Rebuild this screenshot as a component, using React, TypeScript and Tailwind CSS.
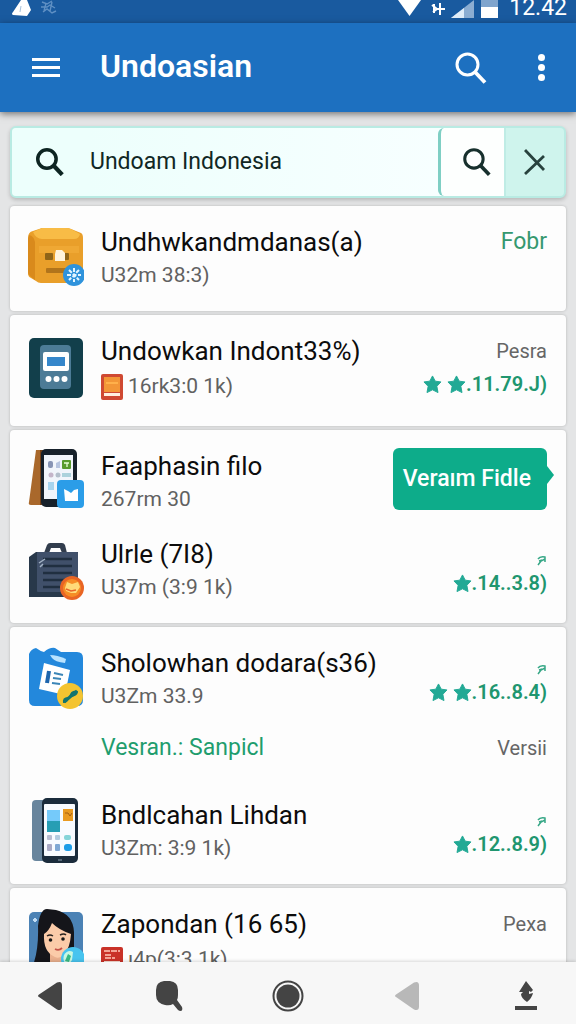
import type { ReactNode } from 'react';

function SearchIcon({ size, stroke }: { size: number; stroke: number }) {
    return (
        <svg width={size} height={size} viewBox="0 0 32 32" fill="none" stroke="currentColor" strokeWidth={stroke} aria-hidden="true">
            <circle cx="12.5" cy="12.5" r="10.5" />
            <path d="M20 20l10 10.5" strokeWidth={stroke + 0.8} />
        </svg>
    );
}

function Star() {
    return (
        <svg width="19" height="19" viewBox="0 0 20 20" fill="#22a995" stroke="#22a995" strokeLinejoin="round" aria-hidden="true">
            <path d="M10 1l2.900 5.500 6 .8-4.300 4.600 1.200 6.600L10 15.600l-5.800 2.900 1.200-6.600L1 7.300l6.100-.8z" />
        </svg>
    );
}

function BoxIcon() {
    return (
        <>
            <path d="M14 4h24q3 0 5 1l10 4q2 1 2 5v40q0 5-5 5H13q-3 0-5-2l-5-3q-3-1-3-5V14q0-6 5-7z" fill="#e99f2a" />
            <path d="M14 4h24q3 0 5 1l9 5q-1 5-6 5H14Q8 15 5 8z" fill="#f8bc46" />
            <path d="M1 11q5 1 6 7v38l-5-4q-2-1-2-5V15z" fill="#d98a1c" />
            <path d="M11 22h40v7H11z" fill="#efa834" />
            <rect x="17" y="29" width="8" height="7" rx="1" fill="#8f6418" />
            <rect x="36" y="29" width="5" height="7" rx="1" fill="#8f6418" />
            <path d="M28 26h6l3 3v8H27v-7z" fill="#fff3dc" />
            <rect x="18" y="44" width="22" height="5" rx="1" fill="#b1741b" />
            <circle cx="46" cy="51" r="11" fill="#2f93dc" />
            <path d="M46 44v14M39 51h14M41 46l10 10M51 46L41 56" stroke="#e4f6ff" strokeWidth="2" strokeDasharray="4 1.5" />
        </>
    );
}

function TerminalIcon() {
    return (
        <>
            <rect x="1" y="5" width="54" height="60" rx="5" fill="#123f4b" />
            <rect x="12" y="12" width="31" height="44" rx="4" fill="#4c7b96" />
            <rect x="15" y="19" width="26" height="19" rx="2" fill="#fff" />
            <rect x="19" y="24" width="18" height="9" fill="#3587cb" />
            <circle cx="20.5" cy="46" r="3" fill="#fff" />
            <circle cx="28.5" cy="46" r="3" fill="#fff" />
            <circle cx="36.5" cy="46" r="3" fill="#fff" />
        </>
    );
}

function TabletIcon() {
    return (
        <>
            <path d="M8 2h10v55H3q-3 0-2-3z" fill="#a9682b" />
            <path d="M12 2h4v55h-4z" fill="#754116" />
            <rect x="13" y="1" width="36" height="58" rx="5" fill="#17212b" />
            <rect x="16" y="7" width="29" height="44" fill="#f1f5fb" />
            <rect x="20" y="13" width="5" height="7" rx="2" fill="#8794b4" />
            <path d="M28 20v-5l4-2v7z" fill="#b6c4df" />
            <rect x="34" y="12" width="9" height="9" rx="1" fill="#5a9c2e" />
            <path d="M36 15h5M39 15v4" stroke="#e9ffd8" strokeWidth="1.3" />
            <circle cx="23" cy="27" r="2.5" fill="#c4b5c9" />
            <circle cx="30" cy="27" r="2.5" fill="#b4bfcc" />
            <rect x="34" y="25" width="9" height="4" fill="#acd2dc" />
            <rect x="20" y="34" width="6" height="8" fill="#a8d4ee" />
            <rect x="29" y="32" width="27" height="28" rx="4" fill="#2b9de8" />
            <path d="M36 41l4 2 3 2 3-3 4-1v12H37z" fill="#fff" />
        </>
    );
}

function SuitcaseIcon() {
    return (
        <>
            <path d="M16 17l3-8q1-2 3-2h12q2 0 3 2l2 8h-5l-2-5H23l-2 5z" fill="#323d4d" />
            <path d="M1 21l7-5h42v45H1z" fill="#28384a" />
            <rect x="9" y="16" width="41" height="40" rx="1" fill="#40506a" />
            <path d="M15 23h29M15 30h29M15 37h29M15 44h23M15 51h20" stroke="#202f40" strokeWidth="2.5" />
            <path d="M11 27l6-4M12 31l3-3" stroke="#a2b2c4" strokeWidth="1.5" />
            <circle cx="44" cy="52" r="12" fill="#e96524" />
            <circle cx="44" cy="52" r="9" fill="#f68d25" />
            <path d="M39 46l5 2 6-2 2 5-4 6h-5l-5-2-1-3z" fill="#ffdb79" />
            <path d="M38 53l5 2 5-1" stroke="#e7632a" strokeWidth="1.5" fill="none" />
        </>
    );
}

function ClipboardIcon() {
    return (
        <>
            <path d="M1 9q2-5 7-6 4 3 8 4 6-5 11-4l6 4h16q6 0 6 6v42q0 6-6 6H7q-6 0-6-6z" fill="#2388dc" />
            <path d="M22 10q7 0 16 4l-1 4q-10-1-13-5z" fill="#b9e3ff" />
            <path d="M16 18l26 7-5 25-26-6z" fill="#fff" />
            <path d="M21 26l-2 12" stroke="#1d65ad" strokeWidth="4" />
            <path d="M26 28l9 2M25 33l8 1M24 38l8 1" stroke="#3c86b7" strokeWidth="2.2" />
            <circle cx="42" cy="51" r="13" fill="#f4c431" />
            <path d="M35 58q-1-6 5-6 1 6-5 6zM41 52q2-8 9-6 0 6-9 6z" fill="#13756f" />
            <path d="M36 57l13-11" stroke="#13756f" strokeWidth="3" />
        </>
    );
}

function PhoneIcon() {
    return (
        <>
            <rect x="4" y="3" width="22" height="61" rx="4" fill="#68859d" />
            <rect x="14" y="1" width="36" height="65" rx="5" fill="#1b2c3c" />
            <rect x="16" y="7" width="31" height="52" rx="1" fill="#f8fbff" />
            <rect x="19" y="13" width="13" height="12" fill="#75cafa" />
            <rect x="19" y="24" width="13" height="11" fill="#279eb4" />
            <rect x="35" y="12" width="10" height="12" fill="#e99a21" />
            <path d="M37 16h3l2 3 2-3" stroke="#a55e12" fill="none" />
            <rect x="19" y="38" width="5" height="5" rx="1" fill="#b9bdd1" />
            <rect x="27" y="38" width="5" height="5" rx="1" fill="#b3cce0" />
            <rect x="36" y="38" width="7" height="5" rx="2" fill="#86d5d9" />
            <rect x="19" y="47" width="5" height="7" rx="1" fill="#aaaac5" />
            <rect x="27" y="47" width="5" height="7" rx="1" fill="#80a8d4" />
            <rect x="36" y="47" width="8" height="7" rx="3" fill="#1e9de7" />
            <path d="M30 63h4" stroke="#8da0b0" />
        </>
    );
}

function PortraitIcon() {
    return (
        <>
            <rect x="1" y="6" width="54" height="60" rx="5" fill="#4b82b5" />
            <path d="M5 14h4M7 12v4" stroke="#c2ddf4" strokeWidth="2" />
            <path d="M10 20Q12 3 19 3l9 1q17 4 18 22v40H2q9-17 8-46z" fill="#15151a" />
            <path d="M22 48h14v18H11q10-4 11-9z" fill="#eab08e" />
            <path d="M16 28q5-3 8-11 7 7 19 11-1 14-7 21-5 4-9 2-12-5-11-23z" fill="#fbcba9" />
            <path d="M19 30q3-2 6 0M32 29q4-2 6 0" stroke="#29221f" strokeWidth="1.5" fill="none" />
            <circle cx="22.5" cy="34" r="1.8" fill="#171717" />
            <circle cx="35" cy="33" r="1.8" fill="#171717" />
            <path d="M27 43q4 2 7-1" stroke="#c45249" strokeWidth="1.8" fill="none" />
            <circle cx="45" cy="53" r="12" fill="#48c4ef" />
            <path d="M36 49q4-6 9-3l-1 8-4 6q-6-4-4-11z" fill="#c9f7e2" />
            <path d="M40 48l3 2-2 6-4-1z" fill="#36b984" />
        </>
    );
}

function OrangeTag() {
    return (
        <svg width="22" height="26" viewBox="0 0 22 26" aria-hidden="true">
            <rect width="22" height="26" rx="2" fill="#cf4932" />
            <rect x="3" y="3" width="16" height="15" fill="#f39637" />
            <path d="M5 9h12" stroke="#ffb04b" strokeWidth="2" />
            <rect x="3" y="19" width="16" height="3" fill="#fff0df" />
        </svg>
    );
}

function RedTag() {
    return (
        <svg width="22" height="26" viewBox="0 0 22 26" aria-hidden="true">
            <rect width="22" height="26" rx="2" fill="#c93228" />
            <path d="M3 4h16M4 8h6M4 11h10" stroke="#ffc9b9" strokeWidth="1.5" strokeDasharray="6 1" />
            <rect x="3" y="14" width="16" height="8" fill="#f8ded5" />
            <path d="M4 17h13" stroke="#c93228" strokeWidth="2" />
        </svg>
    );
}

function TrendMark() {
    return (
        <svg width="10" height="14" viewBox="0 0 10 14" fill="none" stroke="#36a786" strokeWidth="1.5" aria-hidden="true">
            <path d="M1 5q2-3 7-2v5M1 11l3-4 4-2M2 7l3-1" />
        </svg>
    );
}

function Rating({ stars, value }: { stars: number; value: string }) {
    return (
        <div className="flex h-[30px] items-center text-xl font-semibold text-[#20966f]">
            <span className="flex items-center gap-[5px]">
                {Array.from({ length: stars }, (_, i) => (
                    <Star key={i} />
                ))}
            </span>
            {value}
        </div>
    );
}

type AppRowProps = {
    icon: ReactNode;
    title: string;
    detail: string;
    tag?: ReactNode;
    children?: ReactNode;
};

function AppRow({ icon, title, detail, tag, children }: AppRowProps) {
    return (
        <li className="flex gap-[17px]">
            <svg width="56" height="66" viewBox="0 0 56 66" className="shrink-0" aria-hidden="true">
                {icon}
            </svg>
            <div className="min-w-0 flex-1 whitespace-nowrap">
                <h2 className="text-[26px] leading-9 text-[#0c0c0c]">{title}</h2>
                <p className={tag ? 'flex h-9 items-center gap-[5px] text-[21px] text-[#616161]' : 'text-[21px] leading-[30px] text-[#616161]'}>
                    {tag}
                    {detail}
                </p>
            </div>
            {children}
        </li>
    );
}

function Card({ children }: { children: ReactNode }) {
    return (
        <ul className="flex flex-col gap-[22px] rounded-[4px] bg-[#fdfdfd] pt-[18px] pr-[19px] pb-[21px] pl-[18px] shadow-[0_0_3px_rgba(0,0,0,0.22)]">
            {children}
        </ul>
    );
}

function StatusBar() {
    return (
        <div className="flex h-[23px] shrink-0 items-start justify-between bg-[#195a9f] pr-[9px] pl-3 text-white">
            <svg width="46" height="18" viewBox="0 0 46 18" aria-hidden="true">
                <path d="M9 0h6l4 10-4 6-14-1q-2-1 0-3z" fill="#fff" />
                <path d="M9 6l-1 6" stroke="#a5c0dc" />
                <path d="M30 2l5 2 5-3M29 7h6l3-2 5 3M31 12l4-3 5 4 4-2M34 3l-2 8M40 2l-2 9" stroke="#5f90c4" strokeWidth="1.4" fill="none" />
            </svg>
            <div className="flex items-start gap-[7px]">
                <svg width="100" height="18" viewBox="0 0 100 18" aria-hidden="true">
                    <path d="M0 0h23L11.5 16z" fill="#fff" />
                    <path d="M36 4v9M34 5l5 4-4 3M42 3v12M38 9h9" stroke="#fff" strokeWidth="2" fill="none" />
                    <path d="M53 18L76 0v18z" fill="#8badd2" />
                    <path d="M53 18l13-10v10z" fill="#e0edf9" />
                    <path d="M83 0h17v8H83z" fill="#7fa4cd" />
                    <path d="M83 7h17v11H83z" fill="#fff" />
                </svg>
                <span className="-mt-1 pl-1 text-[23px] leading-6">12.42</span>
            </div>
        </div>
    );
}

export default function App() {
    return (
        <div className="flex h-screen flex-col overflow-hidden bg-[#e4e5e6] font-['Roboto',sans-serif]">
            <StatusBar />
            <header className="relative flex h-[89px] shrink-0 items-center bg-[#1d70c0] pr-[23px] pl-8 text-white shadow-[0_2px_7px_rgba(0,0,0,0.5)]">
                <button type="button" aria-label="Menu" className="flex w-7 flex-col gap-[5px]">
                    <span className="h-[3px] w-full bg-white" />
                    <span className="h-[3px] w-full bg-white" />
                    <span className="h-[3px] w-full bg-white" />
                </button>
                <h1 className="flex-1 pb-1 pl-10 text-[32px] font-semibold">Undoasian</h1>
                <button type="button" aria-label="Search">
                    <SearchIcon size={32} stroke={3} />
                </button>
                <button type="button" aria-label="More options" className="ml-[42px] flex w-6 flex-col items-center gap-[3px]">
                    <span className="size-[7px] rounded-full bg-white" />
                    <span className="size-[7px] rounded-full bg-white" />
                    <span className="size-[7px] rounded-full bg-white" />
                </button>
            </header>

            <main className="flex min-h-0 flex-1 flex-col gap-1 overflow-hidden px-[10px] pt-[14px]">
                <form className="mb-1 flex h-[72px] shrink-0 overflow-hidden rounded-md border-2 border-[#b9ebe3] bg-[#cff4ed] shadow-[0_2px_4px_rgba(0,0,0,0.2)]" onSubmit={(e) => e.preventDefault()}>
                    <label htmlFor="query" aria-label="Search text" className="flex items-center bg-[#edfffc] px-6 text-[#0d2522]">
                        <SearchIcon size={28} stroke={4} />
                    </label>
                    <input id="query" type="text" defaultValue="Undoam Indonesia" className="min-w-0 flex-1 bg-linear-to-r from-[#edfffc] to-[#f7ffff] pl-[2px] text-[23px] text-[#102724] outline-none" />
                    <span className="flex bg-[#f7ffff]">
                        <button type="submit" aria-label="Search" className="flex w-[66px] items-center justify-center rounded-l-md border-l-[3px] border-[#7fcfc4] bg-[#fdfffe] pl-2 text-[#17302d]">
                            <SearchIcon size={28} stroke={3.5} />
                        </button>
                    </span>
                    <button type="reset" aria-label="Clear" className="flex w-[60px] items-center justify-center border-l-2 border-[#bfece5] text-[#28423e]">
                        <svg width="22" height="28" viewBox="0 0 22 28" fill="none" stroke="currentColor" strokeWidth="2.8" aria-hidden="true">
                            <path d="M1 2l19 20M1 26L20 8" />
                        </svg>
                    </button>
                </form>

                <Card>
                    <AppRow icon={<BoxIcon />} title="Undhwkandmdanas(a)" detail="U32m 38:3)">
                        <span className="text-[23px] leading-9 text-[#35986f]">Fobr</span>
                    </AppRow>
                </Card>

                <Card>
                    <AppRow icon={<TerminalIcon />} title="Undowkan Indont33%)" detail="16rk3:0 1k)" tag={<OrangeTag />}>
                        <div className="flex flex-col items-end">
                            <span className="text-xl leading-9 text-[#666]">Pesra</span>
                            <Rating stars={2} value=".11.79.J)" />
                        </div>
                    </AppRow>
                </Card>

                <Card>
                    <AppRow icon={<TabletIcon />} title="Faaphasin filo" detail="267rm 30">
                        <button type="button" className="relative h-[62px] rounded-md bg-[#0dac8a] pr-4 pl-[10px] text-[23px] font-medium whitespace-nowrap text-white">
                            Veraım Fidle
                            <svg width="7" height="18" viewBox="0 0 7 18" className="absolute top-[18px] -right-[7px]" aria-hidden="true">
                                <path d="M0 0l7 9-7 9z" fill="#0dac8a" />
                            </svg>
                        </button>
                    </AppRow>
                    <AppRow icon={<SuitcaseIcon />} title="Ulrle (7I8)" detail="U37m (3:9 1k)">
                        <div className="flex flex-col items-end justify-end pb-1">
                            <TrendMark />
                            <Rating stars={1} value=".14..3.8)" />
                        </div>
                    </AppRow>
                </Card>

                <Card>
                    <AppRow icon={<ClipboardIcon />} title="Sholowhan dodara(s36)" detail="U3Zm 33.9">
                        <div className="flex flex-col items-end justify-end pb-1">
                            <TrendMark />
                            <Rating stars={2} value=".16..8.4)" />
                        </div>
                    </AppRow>
                    <li className="flex justify-between pb-3 pl-[73px]">
                        <span className="text-[23px] leading-[30px] text-[#1f9d6e]">Vesran.: Sanpicl</span>
                        <span className="text-xl leading-[30px] text-[#666]">Versii</span>
                    </li>
                    <AppRow icon={<PhoneIcon />} title="Bndlcahan Lihdan" detail="U3Zm: 3:9 1k)">
                        <div className="flex flex-col items-end justify-end pb-1">
                            <TrendMark />
                            <Rating stars={1} value=".12..8.9)" />
                        </div>
                    </AppRow>
                </Card>

                <Card>
                    <AppRow icon={<PortraitIcon />} title="Zapondan (16 65)" detail="ı4p(3:3 1k)" tag={<RedTag />}>
                        <span className="text-xl leading-9 text-[#666]">Pexa</span>
                    </AppRow>
                </Card>
            </main>

            <nav className="relative flex h-[62px] shrink-0 items-center justify-between bg-[#f7f7f7] px-[30px] pt-[6px] text-[#444] shadow-[0_-1px_3px_rgba(0,0,0,0.15)]">
                <button type="button" aria-label="Back" className="flex size-10 items-center justify-center">
                    <svg width="25" height="30" viewBox="0 0 25 30" fill="currentColor" aria-hidden="true">
                        <path d="M1 13.5L19 1.500q5-2 5 3v21q0 5-5 3L1 16q-2-1 0-2.500z" />
                    </svg>
                </button>
                <button type="button" aria-label="Find" className="flex size-10 items-center justify-center">
                    <svg width="28" height="32" viewBox="0 0 28 32" fill="currentColor" aria-hidden="true">
                        <path d="M9 1h6q8 1 8 9v5q0 3-1 5l5 7q1 3-1 4-2 0-3-1l-5-6q-3 2-8 1-9-2-9-10v-5q0-8 8-9z" />
                    </svg>
                </button>
                <button type="button" aria-label="Home" className="flex size-10 items-center justify-center">
                    <svg width="32" height="32" viewBox="0 0 32 32" aria-hidden="true">
                        <circle cx="16" cy="16" r="14.5" fill="none" stroke="currentColor" strokeWidth="2" />
                        <circle cx="16" cy="16" r="11.5" fill="currentColor" />
                    </svg>
                </button>
                <button type="button" aria-label="Previous" className="flex size-10 items-center justify-center text-[#b8b8b8]">
                    <svg width="25" height="30" viewBox="0 0 25 30" fill="currentColor" aria-hidden="true">
                        <path d="M1 13.5L19 1.500q5-2 5 3v21q0 5-5 3L1 16q-2-1 0-2.500z" />
                    </svg>
                </button>
                <button type="button" aria-label="Upload" className="flex size-10 items-center justify-center">
                    <svg width="24" height="30" viewBox="0 0 24 30" fill="currentColor" aria-hidden="true">
                        <path d="M12 0l7 9-2 2-2-1v3l4-1q-1 5-6 9-6-4-6-8l2-2H5z" />
                        <rect x="1" y="25" width="22" height="4" />
                    </svg>
                </button>
            </nav>
        </div>
    );
}
